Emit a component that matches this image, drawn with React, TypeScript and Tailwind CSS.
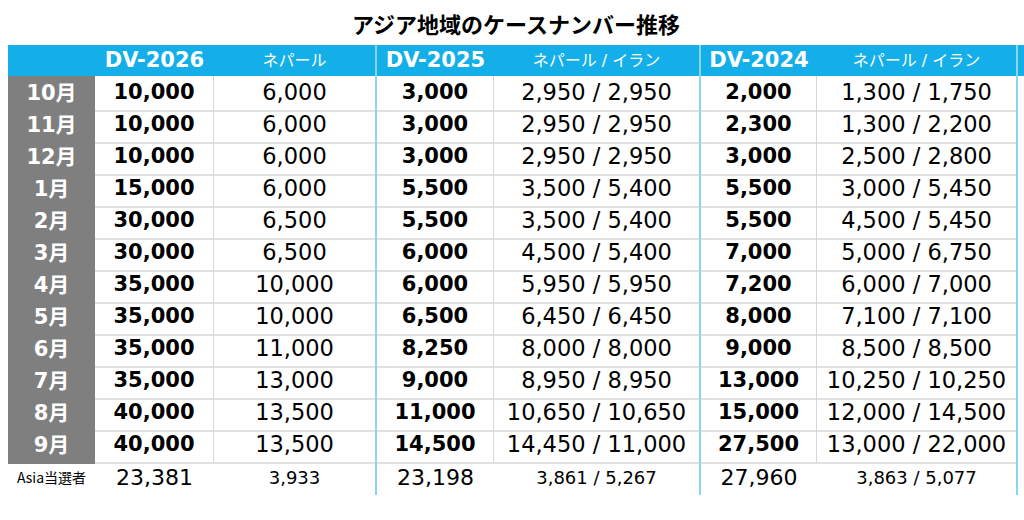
import React from 'react'

const cols = 'grid grid-cols-[87px_119px_161px_119px_205px_118px_201px]'
const font = 'font-["DejaVu_Sans","Noto_Sans_CJK_JP",sans-serif]'

const rows: string[][] = [
  ['10月', '10,000', '6,000', '3,000', '2,950 / 2,950', '2,000', '1,300 / 1,750'],
  ['11月', '10,000', '6,000', '3,000', '2,950 / 2,950', '2,300', '1,300 / 2,200'],
  ['12月', '10,000', '6,000', '3,000', '2,950 / 2,950', '3,000', '2,500 / 2,800'],
  ['1月', '15,000', '6,000', '5,500', '3,500 / 5,400', '5,500', '3,000 / 5,450'],
  ['2月', '30,000', '6,500', '5,500', '3,500 / 5,400', '5,500', '4,500 / 5,450'],
  ['3月', '30,000', '6,500', '6,000', '4,500 / 5,400', '7,000', '5,000 / 6,750'],
  ['4月', '35,000', '10,000', '6,000', '5,950 / 5,950', '7,200', '6,000 / 7,000'],
  ['5月', '35,000', '10,000', '6,500', '6,450 / 6,450', '8,000', '7,100 / 7,100'],
  ['6月', '35,000', '11,000', '8,250', '8,000 / 8,000', '9,000', '8,500 / 8,500'],
  ['7月', '35,000', '13,000', '9,000', '8,950 / 8,950', '13,000', '10,250 / 10,250'],
  ['8月', '40,000', '13,500', '11,000', '10,650 / 10,650', '15,000', '12,000 / 14,500'],
  ['9月', '40,000', '13,500', '14,500', '14,450 / 11,000', '27,500', '13,000 / 22,000'],
]

const totals = ['Asia当選者', '23,381', '3,933', '23,198', '3,861 / 5,267', '27,960', '3,863 / 5,077']

// vertical lines per column: gray between pairs, light blue between years
const sideLines = [
  '',
  'border-r border-[#d6d6d6]',
  '',
  'border-l-2 border-l-[#8dd3f3] border-r border-r-[#d6d6d6]',
  '',
  'border-l-2 border-l-[#8dd3f3] border-r border-r-[#d6d6d6]',
  'border-r-2 border-r-[#8dd3f3]',
]

const footLines = ['', '', '', 'border-l-2 border-[#8dd3f3]', '', 'border-l-2 border-[#8dd3f3]', 'border-r-2 border-[#8dd3f3]']

export default function App() {
  return (
    <div className={`w-[1024px] h-[520px] bg-white ${font}`}>
      <h1 className="h-[45px] flex items-center justify-center pl-[8px] pt-[1px] text-[22px] font-bold text-black font-['Noto_Sans_CJK_JP',sans-serif]">
        アジア地域のケースナンバー推移
      </h1>

      <div className="pl-[8px]">
        <div className={`${cols} h-[31px] bg-[#14afe8] text-white`}>
          <div />
          <div className="flex items-center justify-center text-[21px] font-bold">DV-2026</div>
          <div className="flex items-center justify-center text-[16px]">ネパール</div>
          <div className="flex items-center justify-center text-[21px] font-bold border-l-2 border-[#8dd3f3]">DV-2025</div>
          <div className="flex items-center justify-center text-[16px]">ネパール / イラン</div>
          <div className="flex items-center justify-center text-[21px] font-bold border-l-2 border-[#8dd3f3]">DV-2024</div>
          <div className="flex items-center justify-center text-[16px] border-r-2 border-[#8dd3f3]">ネパール / イラン</div>
        </div>

        {rows.map((row) => (
          <div key={row[0]} className={`${cols} h-[32px] text-black`}>
            <div className="flex items-center justify-center bg-[#7f7f7f] text-white text-[21px] font-bold">
              {row[0]}
            </div>
            {row.slice(1).map((cell, i) => (
              <div
                key={i}
                className={`flex items-center justify-center border-b-2 border-b-[#e0e0e0] ${sideLines[i + 1]} ${
                  i % 2 === 0 ? 'text-[21px] font-bold' : 'text-[22.5px]'
                }`}
              >
                {cell}
              </div>
            ))}
          </div>
        ))}

        <div className={`${cols} h-[35px] text-black`}>
          <div className="flex items-center justify-center text-[14px] font-['Noto_Sans_CJK_JP',sans-serif]">
            {totals[0]}
          </div>
          {totals.slice(1).map((cell, i) => (
            <div
              key={i}
              className={`flex items-center justify-center ${footLines[i + 1]} ${
                i % 2 === 0 ? 'text-[22px]' : 'text-[18px]'
              }`}
            >
              {cell}
            </div>
          ))}
        </div>
      </div>
    </div>
  )
}
